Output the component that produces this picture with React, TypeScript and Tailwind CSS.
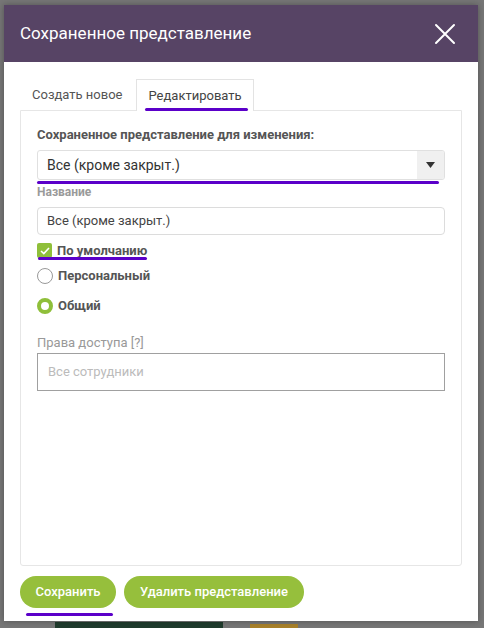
import { useState } from 'react'

const font = { fontFamily: 'Roboto, "Liberation Sans", Arial, sans-serif' }

function CloseIcon() {
  return (
    <svg width="22" height="22" viewBox="0 0 22 22" fill="none" stroke="white" strokeWidth="2" strokeLinecap="round">
      <path d="M2 2 L20 20 M20 2 L2 20" />
    </svg>
  )
}

export default function App() {
  const [tab, setTab] = useState<'new' | 'edit'>('edit')
  const [scope, setScope] = useState<'personal' | 'shared'>('shared')
  const [isDefault, setIsDefault] = useState(true)

  return (
    <div className="relative h-[628px] w-[484px] overflow-hidden bg-[#767676] pl-[4px] pt-[5px]" style={font}>
      <div className="absolute bottom-0 left-[55px] h-[6px] w-[168px] bg-[#1f3b2c]" />
      <div className="absolute bottom-0 left-[250px] h-[4px] w-[48px] bg-[#a8812a]" />

      <div className="relative flex h-[616px] w-[474px] flex-col bg-white shadow-[0_0_6px_rgba(0,0,0,0.3)]">
        <header className="flex h-[57px] items-center justify-between bg-[#574465] pl-[16px] pr-[22px]">
          <h1 className="text-[17px] font-normal text-white">Сохраненное представление</h1>
          <button type="button">
            <CloseIcon />
          </button>
        </header>

        <div className="px-[16px] pt-[17px]">
          <div className="flex h-[31px] items-stretch">
            <button
              type="button"
              onClick={() => setTab('new')}
              className={`px-[12px] text-[13px] ${tab === 'new' ? 'relative z-10 -mb-px border border-b-0 border-[#e3e3e3] bg-white text-[#444]' : 'text-[#555]'}`}
            >
              Создать новое
            </button>
            <button
              type="button"
              onClick={() => setTab('edit')}
              className={`relative ml-[2px] px-[11px] text-[13px] ${tab === 'edit' ? 'z-10 -mb-px h-[32px] border border-b-0 border-[#e3e3e3] bg-white text-[#444]' : 'text-[#555]'}`}
            >
              Редактировать
              {tab === 'edit' && (
                <span className="absolute bottom-[0px] left-[8px] h-[3px] w-[103px] rounded-full bg-[#5b00c9]" />
              )}
            </button>
          </div>

          <div className="h-[456px] rounded-b-[3px] border border-[#e6e6e6] px-[16px] pt-[16px]">
            <p className="text-[13px] font-bold leading-[16px] text-[#555]">
              Сохраненное представление для изменения:
            </p>
            <div className="mt-[7px] flex h-[30px] items-stretch overflow-hidden rounded-[3px] border border-[#e0e0e0]">
              <span className="flex flex-1 items-center pl-[9px] text-[14px] text-[#333]">Все (кроме закрыт.)</span>
              <span className="flex w-[27px] items-center justify-center bg-[#f0f0f0]">
                <svg width="9" height="6" viewBox="0 0 9 6">
                  <path d="M0 0 H9 L4.5 6 Z" fill="#333" />
                </svg>
              </span>
            </div>
            <div className="mt-[1px] h-[3px] w-[402px] rounded-full bg-[#5b00c9]" />

            <p className="mt-[1px] text-[12px] font-bold leading-[14px] text-[#9a9a9a]">Название</p>
            <div className="mt-[8px] flex h-[28px] items-center rounded-[4px] border border-[#dcdcdc] pl-[9px] text-[13px] text-[#444]">
              Все (кроме закрыт.)
            </div>

            <label className="relative mt-[8px] flex h-[15px] cursor-pointer items-center gap-[5px]">
              <span
                onClick={() => setIsDefault(!isDefault)}
                className={`flex h-[15px] w-[15px] items-center justify-center rounded-[2px] ${isDefault ? 'bg-[#8fbf3a]' : 'border border-[#999] bg-white'}`}
              >
                {isDefault && (
                  <svg width="10" height="8" viewBox="0 0 10 8" fill="none" stroke="white" strokeWidth="1.6">
                    <path d="M1 4 L3.8 6.6 L9 1" />
                  </svg>
                )}
              </span>
              <span className="text-[13px] font-bold text-[#555]">По умолчанию</span>
              <span className="absolute left-[1px] top-[14px] h-[3px] w-[109px] rounded-full bg-[#5b00c9]" />
            </label>

            <label className="mt-[10px] flex h-[16px] cursor-pointer items-center gap-[5px]" onClick={() => setScope('personal')}>
              <span
                className={`h-[16px] w-[16px] rounded-full ${scope === 'personal' ? 'border-[4px] border-[#8fbf3a]' : 'border border-[#999]'}`}
              />
              <span className="text-[13px] font-bold text-[#555]">Персональный</span>
            </label>

            <label className="mt-[14px] flex h-[16px] cursor-pointer items-center gap-[5px]" onClick={() => setScope('shared')}>
              <span
                className={`h-[16px] w-[16px] rounded-full ${scope === 'shared' ? 'border-[4px] border-[#8fbf3a]' : 'border border-[#999]'}`}
              />
              <span className="text-[13px] font-bold text-[#555]">Общий</span>
            </label>

            <p className="mt-[21px] text-[13px] leading-[16px] text-[#999]">Права доступа [?]</p>
            <div className="mt-[2px] flex h-[38px] items-center border border-[#a0a0a0] pl-[10px] text-[13px] text-[#bbb]">
              Все сотрудники
            </div>
          </div>

          <div className="mt-[10px] flex gap-[8px]">
            <div className="flex flex-col items-center">
              <button type="button" className="h-[32px] w-[96px] rounded-full bg-[#96bf3c] text-[13px] font-medium text-white">
                Сохранить
              </button>
              <span className="ml-[2px] mt-[5px] h-[3px] w-[87px] rounded-full bg-[#5b00c9]" />
            </div>
            <button type="button" className="h-[32px] w-[180px] rounded-full bg-[#96bf3c] text-[13px] font-medium text-white">
              Удалить представление
            </button>
          </div>
        </div>
      </div>
    </div>
  )
}
